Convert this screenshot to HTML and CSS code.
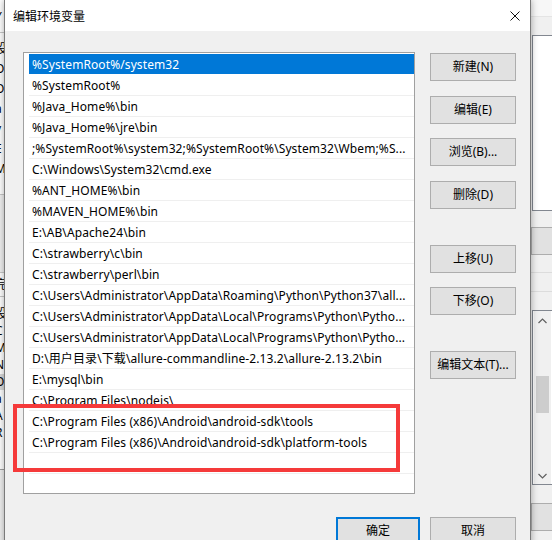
FILE: index.html
```html
<!DOCTYPE html>
<html lang="zh-CN">
<head>
<meta charset="utf-8">
<title>编辑环境变量</title>
<link rel="stylesheet" href="styles.css">
</head>
<body>
<div class="bgwin bg-left">
  <div class="bl-title"><span class="frag">Y</span></div>
  <div class="bl-list">
    <div class="frag-row">设</div>
    <div class="frag-row">O</div>
    <div class="frag-row">O</div>
    <div class="frag-row">a</div>
    <div class="frag-row">y</div>
    <div class="frag-row">E</div>
    <div class="frag-row">M</div>
  </div>
  <div class="bl-gap"></div>
  <div class="bl-head"><span class="frag">完</span></div>
  <div class="bl-list2">
    <div class="frag-row2">设</div>
    <div class="frag-row2">C</div>
    <div class="frag-row2">M</div>
    <div class="frag-row2">N</div>
    <div class="frag-row2 sel">O</div>
    <div class="frag-row2">a</div>
    <div class="frag-row2">A</div>
    <div class="frag-row2">R</div>
  </div>
</div>

<div class="bgwin bg-right">
  <div class="br-title"></div>
  <div class="br-box br-box1"></div>
  <div class="br-btn br-btn1"></div>
  <div class="br-lines"></div>
  <div class="br-box br-box2">
    <div class="br-scroll">
      <svg class="chev" width="9" height="6" viewBox="0 0 9 6"><path d="M0.5 5 L4.5 1 L8.5 5" fill="none" stroke="#606060" stroke-width="1.2"/></svg>
      <div class="br-track"><div class="br-thumb"></div></div>
      <svg class="chev" width="9" height="6" viewBox="0 0 9 6"><path d="M0.5 1 L4.5 5 L8.5 1" fill="none" stroke="#606060" stroke-width="1.2"/></svg>
    </div>
  </div>
  <div class="br-btn br-btn2"></div>
</div>

<div class="dialog">
  <div class="titlebar">
    <span class="title">编辑环境变量</span>
    <svg class="close" width="10" height="10" viewBox="0 0 10 10"><path d="M0.5 0.5 L9.5 9.5 M9.5 0.5 L0.5 9.5" stroke="#111" stroke-width="1" fill="none"/></svg>
  </div>
  <div class="client">
    <div class="main">
      <div class="listbox">
        <div class="row selected">%SystemRoot%/system32</div>
        <div class="row">%SystemRoot%</div>
        <div class="row">%Java_Home%\bin</div>
        <div class="row">%Java_Home%\jre\bin</div>
        <div class="row">;%SystemRoot%\system32;%SystemRoot%\System32\Wbem;%S...</div>
        <div class="row">C:\Windows\System32\cmd.exe</div>
        <div class="row">%ANT_HOME%\bin</div>
        <div class="row">%MAVEN_HOME%\bin</div>
        <div class="row">E:\AB\Apache24\bin</div>
        <div class="row">C:\strawberry\c\bin</div>
        <div class="row">C:\strawberry\perl\bin</div>
        <div class="row">C:\Users\Administrator\AppData\Roaming\Python\Python37\all...</div>
        <div class="row">C:\Users\Administrator\AppData\Local\Programs\Python\Pytho...</div>
        <div class="row">C:\Users\Administrator\AppData\Local\Programs\Python\Pytho...</div>
        <div class="row">D:\用户目录\下载\allure-commandline-2.13.2\allure-2.13.2\bin</div>
        <div class="row">E:\mysql\bin</div>
        <div class="row">C:\Program Files\nodejs\</div>
        <div class="row">C:\Program Files (x86)\Android\android-sdk\tools</div>
        <div class="row">C:\Program Files (x86)\Android\android-sdk\platform-tools</div>
        <div class="row empty"></div>
      </div>
      <div class="buttons">
        <button class="btn b-first">新建(N)</button>
        <button class="btn b-15">编辑(E)</button>
        <button class="btn b-14">浏览(B)...</button>
        <button class="btn b-15">删除(D)</button>
        <button class="btn b-group">上移(U)</button>
        <button class="btn b-14">下移(O)</button>
        <button class="btn b-group">编辑文本(T)...</button>
      </div>
    </div>
    <div class="footer">
      <button class="btn btn-ok">确定</button>
      <button class="btn btn-cancel">取消</button>
    </div>
  </div>
  <div class="highlight"></div>
</div>
</body>
</html>
```

FILE: styles.css
```css
* { box-sizing: border-box; }
html, body { margin: 0; padding: 0; }
body {
  width: 552px;
  height: 540px;
  overflow: hidden;
  position: relative;
  background: #f0f0f0;
  font-family: "Noto Sans", "Noto Sans CJK SC", sans-serif;
  font-size: 12px;
  color: #000;
}

/* ---------- background windows ---------- */
.bgwin { position: absolute; top: 0; overflow: hidden; }
.bg-left {
  left: 0;
  width: 8px;
  height: 540px;
  background: #f0f0f0;
  display: flex;
  flex-direction: column;
}
.frag, .frag-row, .frag-row2 {
  font-size: 12px;
  line-height: 16px;
  margin-left: -5px;
  white-space: nowrap;
}
.bl-title { height: 33px; background: #fff; border-bottom: 1px solid #c8c8c8; padding-top: 8px; flex: none; }
.bl-list { height: 162px; background: #fff; border-bottom: 1px solid #c8c8c8; padding-top: 6px; flex: none; }
.frag-row { height: 20px; line-height: 20px; }
.bl-gap { height: 78px; border-bottom: 1px solid #c8c8c8; flex: none; }
.bl-head { height: 24px; background: #fff; border-bottom: 1px solid #c8c8c8; padding-top: 3px; flex: none; }
.bl-list2 { height: 173px; background: #fff; border-bottom: 1px solid #a0a0a0; padding-top: 9px; flex: none; }
.frag-row2 { height: 16px; line-height: 16px; margin-bottom: 1px; }
.frag-row2.sel { background: #d9d9d9; }

.bg-right {
  left: 531px;
  width: 21px;
  height: 540px;
  background: #f0f0f0;
  display: flex;
  flex-direction: column;
}
.br-title { height: 17px; background: #f7f7f7; border-bottom: 1px solid #e4e4e4; flex: none; }
.br-box { border: 1px solid #828790; border-right: none; background: #fff; margin-left: 1px; flex: none; }
.br-box1 { margin-top: 18px; height: 176px; }
.br-btn { height: 28px; border: 1px solid #adadad; border-right: none; background: #e1e1e1; flex: none; }
.br-btn1 { margin-top: 16px; }
.br-lines { height: 20px; border-top: 1px solid #dcdcdc; border-bottom: 1px solid #dcdcdc; margin-top: 17px; margin-bottom: 18px; flex: none; }
.br-box2 { height: 175px; padding: 0 1px 0 1px; }
.br-scroll {
  height: 100%;
  width: 17px;
  background: #f0f0f0;
  display: flex;
  flex-direction: column;
  align-items: center;
  padding: 7px 0 5px;
}
.chev { flex: none; }
.br-track { flex: 1; width: 100%; padding: 0 2px; }
.br-thumb { margin-top: 52px; height: 37px; background: #cdcdcd; }
.br-btn2 { margin-top: 18px; height: 28px; }

/* ---------- dialog ---------- */
.dialog {
  position: absolute;
  left: 4px;
  top: 0;
  width: 527px;
  height: 560px;
  background: #f0f0f0;
  border: 1px solid #7a7a7a;
  border-top: none;
  box-shadow: 0 0 7px rgba(0, 0, 0, 0.35);
  display: flex;
  flex-direction: column;
}
.titlebar {
  height: 31px;
  flex: none;
  background: #fff;
  display: flex;
  align-items: center;
  justify-content: space-between;
  padding: 0 10px 0 8px;
}
.title {
  font-family: "Noto Sans CJK SC", sans-serif;
  font-size: 12px;
  line-height: 16px;
  margin-top: 1px;
}
.close { display: block; }

.client {
  flex: 1;
  padding: 21px 14px 0 18px;
  display: flex;
  flex-direction: column;
}
.main { display: flex; gap: 15px; }

.listbox {
  width: 392px;
  height: 442px;
  flex: none;
  background: #fff;
  border: 1px solid #a0a0a0;
  padding: 1px 0 0 5px;
  overflow: hidden;
}
.row {
  height: 21px;
  line-height: 22px;
  border-bottom: 1px solid #efefef;
  padding-left: 3px;
  white-space: nowrap;
  overflow: hidden;
  letter-spacing: 0.1px;
}
.row.selected {
  background: #0078d7;
  color: #fff;
  border-bottom-color: #fff;
}

.buttons {
  width: 86px;
  flex: none;
  display: flex;
  flex-direction: column;
}
.btn {
  font-family: "Noto Sans", "Noto Sans CJK SC", sans-serif;
  font-size: 12px;
  color: #000;
  height: 28px;
  width: 86px;
  padding: 0;
  background: #e1e1e1;
  border: 1px solid #adadad;
  border-radius: 0;
  line-height: 16px;
}
.b-first { margin-top: 1px; }
.b-15 { margin-top: 15px; }
.b-14 { margin-top: 14px; }
.b-group { margin-top: 36px; }

.footer {
  margin-top: 23px;
  display: flex;
  justify-content: flex-end;
  gap: 10px;
}
.btn-ok { width: 84px; border: 2px solid #0078d7; }

.highlight {
  position: absolute;
  left: 8px;
  top: 404px;
  width: 387px;
  height: 68px;
  border: 4px solid #f53a3a;
}
```
